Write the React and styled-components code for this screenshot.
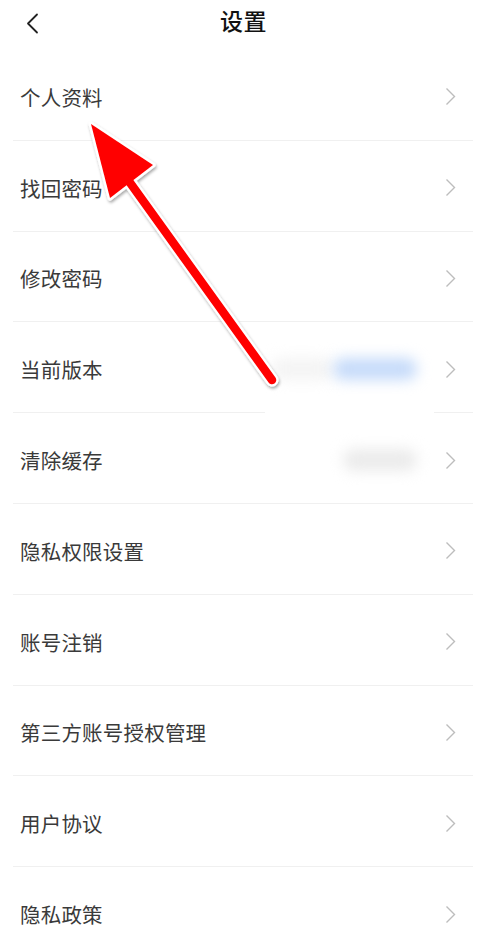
import styled, { createGlobalStyle } from "styled-components";

const GlobalStyle = createGlobalStyle`
  html, body {
    margin: 0;
    padding: 0;
    background: #fff;
  }
  body {
    font-family: "Noto Sans CJK SC", "Noto Sans", sans-serif;
  }
`;

const items = [
  { label: "个人资料" },
  { label: "找回密码" },
  { label: "修改密码" },
  { label: "当前版本", value: "version", gap: true },
  { label: "清除缓存", value: "cache" },
  { label: "隐私权限设置" },
  { label: "账号注销" },
  { label: "第三方账号授权管理" },
  { label: "用户协议" },
  { label: "隐私政策" },
];

const BackIcon = () => (
  <svg width="14" height="22" viewBox="0 0 14 22">
    <path d="M11 1.5 L2 10.5 L11 19.5" fill="none" stroke="#222" strokeWidth="1.8" strokeLinecap="round" strokeLinejoin="round" />
  </svg>
);

const Chevron = () => (
  <svg width="11" height="19" viewBox="0 0 11 19">
    <path d="M1.5 1.5 L9.5 9.5 L1.5 17.5" fill="none" stroke="#bdbdbd" strokeWidth="1.4" />
  </svg>
);

const Arrow = () => (
  <ArrowSvg viewBox="0 0 492 937">
    <g filter="url(#shadow)">
      <line x1="118" y1="166" x2="272" y2="380" stroke="#fff" strokeWidth="13" strokeLinecap="round" />
      <polygon points="91,124 153,165 110,198" fill="#fff" stroke="#fff" strokeWidth="5" strokeLinejoin="round" />
      <line x1="118" y1="166" x2="272" y2="380" stroke="#f00" strokeWidth="8.5" strokeLinecap="round" />
      <polygon points="91,124 153,165 110,198" fill="#f00" />
    </g>
    <defs>
      <filter id="shadow" x="-20%" y="-20%" width="140%" height="140%">
        <feDropShadow dx="1" dy="2" stdDeviation="1.6" floodColor="#000" floodOpacity="0.35" />
      </filter>
    </defs>
  </ArrowSvg>
);

const App = () => {
  return (
    <Page>
      <GlobalStyle />
      <Header>
        <Back><BackIcon /></Back>
        <Title>设置</Title>
        <span />
      </Header>
      <List>
        {items.map((item) => (
          <Row key={item.label} $gap={item.gap}>
            <Label>{item.label}</Label>
            {item.value === "version" && (
              <Values>
                <Blur $w={62} $color="#f4f4f4" />
                <Blur $w={84} $color="#c6dbfa" />
              </Values>
            )}
            {item.value === "cache" && (
              <Values>
                <Blur $w={74} $color="#ebebeb" />
              </Values>
            )}
            <Chevron />
          </Row>
        ))}
      </List>
      <Arrow />
    </Page>
  );
};

const Page = styled.div`
  position: relative;
  width: 492px;
  height: 937px;
  overflow: hidden;
  background: #fff;
`;

const Header = styled.div`
  display: grid;
  grid-template-columns: 1fr auto 1fr;
  align-items: center;
  height: 46px;
  padding-bottom: 4px;
`;

const Back = styled.div`
  display: flex;
  padding-left: 26px;
  padding-top: 1px;
`;

const Title = styled.div`
  font-size: 23px;
  font-weight: 500;
  color: #111;
  letter-spacing: 0.5px;
  margin-left: -5px;
  margin-bottom: 7px;
`;

const List = styled.div`
  margin: 0 19px 0 13px;
`;

const Row = styled.div`
  display: flex;
  align-items: center;
  height: 90.8px;
  box-sizing: border-box;
  padding: 3px 17px 0 7px;
  background: ${(p) =>
    p.$gap
      ? "linear-gradient(to right, #f0f0f0 252px, transparent 252px, transparent 421px, #f0f0f0 421px) bottom / 100% 1px no-repeat"
      : "linear-gradient(#f0f0f0, #f0f0f0) bottom / 100% 1px no-repeat"};
`;

const Label = styled.div`
  flex: 1;
  font-size: 20.5px;
  color: #3a3a3a;
  letter-spacing: 0.2px;
`;

const Values = styled.div`
  display: flex;
  align-items: center;
  margin-right: 28px;
`;

const Blur = styled.span`
  width: ${(p) => p.$w}px;
  height: 22px;
  background: ${(p) => p.$color};
  border-radius: 10px;
  filter: blur(7px);
`;

const ArrowSvg = styled.svg`
  position: absolute;
  top: 0;
  left: 0;
  width: 492px;
  height: 937px;
  pointer-events: none;
`;

export default App;
